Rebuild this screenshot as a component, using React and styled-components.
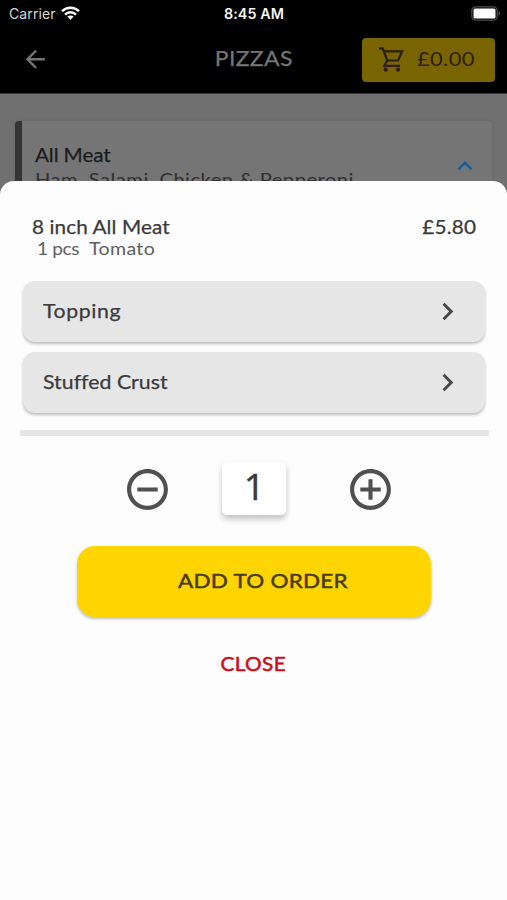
import React from 'react';
import styled, { createGlobalStyle } from 'styled-components';
import {
  MdAddCircleOutline,
  MdArrowBack,
  MdChevronRight,
  MdKeyboardArrowUp,
  MdRemoveCircleOutline,
} from 'react-icons/md';

const GlobalStyle = createGlobalStyle`
  *, *::before, *::after { box-sizing: border-box; }
  body { margin: 0; background: #707070; font-family: Lato, "Open Sans", sans-serif; }
  button { font: inherit; border: 0; padding: 0; background: none; cursor: pointer; }
`;

const Screen = styled.div`
  position: relative;
  width: 100%;
  height: 900px;
  overflow: hidden;
  background: #707070;
`;

/* Lato, widened slightly for a rounder geometric look. */
const Label = styled.span`
  display: block;
  white-space: pre;
  font-size: ${(p) => p.$size}px;
  line-height: 24px;
  letter-spacing: ${(p) => p.$track || 0}px;
  color: ${(p) => p.$color || '#3a3a3a'};
  -webkit-text-stroke: ${(p) => p.$heft || 0}px currentColor;
  transform: scaleX(1.12);
  transform-origin: ${(p) => p.$origin || 'left'} center;
`;

const StatusBar = styled.div`
  display: grid;
  grid-template-columns: 1fr auto 1fr;
  align-items: center;
  height: 27px;
  padding: 0 6px 0 9px;
  background: #000;
  color: #f4f4f4;
  font-family: Inter, sans-serif;
`;

const Carrier = styled.div`
  display: flex;
  align-items: center;
  gap: 5px;
  font-size: 14px;
  letter-spacing: 0.1px;
  color: #d8d8d8;

  svg { margin-bottom: 2px; }
`;

const Clock = styled.div`
  font-size: 14.3px;
  font-weight: 600;
  letter-spacing: 0.1px;
  padding-right: 2px;
`;

const BatterySlot = styled.div`
  display: flex;
  justify-content: flex-end;
  padding-bottom: 1px;
`;

const Header = styled.header`
  display: grid;
  grid-template-columns: 1fr auto 1fr;
  align-items: center;
  height: 67px;
  padding: 0 12px 0 21px;
  border-bottom: 1px solid #393939;
  background: #000;
`;

const BackButton = styled.button`
  display: flex;
  justify-self: start;
  margin-bottom: 1px;
  color: #757575;
  font-size: 28.5px;
`;

const Title = styled.div`
  padding: 0 8px 4px 0;
`;

const CartButton = styled.button`
  display: flex;
  align-items: center;
  justify-self: end;
  gap: 12px;
  width: 133px;
  height: 44px;
  margin-bottom: 1px;
  padding: 0 0 1px 14px;
  border-radius: 4px;
  background: #786400;

  svg { flex: none; }
`;

const MenuCard = styled.section`
  display: flex;
  justify-content: space-between;
  height: 100px;
  margin: 27px 15px 0;
  padding: 22px 12px 0 13px;
  border-left: 7px solid #353535;
  border-radius: 4px;
  background: #757575;
  box-shadow: 0 0 3px rgba(0, 0, 0, 0.1);

  > svg { margin-top: 8px; color: #125f9c; font-size: 30px; }
`;

const Sheet = styled.section`
  position: absolute;
  inset: 181px 0 0;
  padding: 34px 22.5px 0 23px;
  border-radius: 14px 14px 0 0;
  background: #fdfdfd;
`;

const ItemHeading = styled.div`
  display: flex;
  justify-content: space-between;
  padding: 0 8px 0 9px;
`;

const Details = styled.div`
  display: flex;
  gap: 14px;
  height: 41px;
  padding: 0 14px;
  margin-top: -2px;
`;

const OptionRow = styled.button`
  display: flex;
  align-items: center;
  justify-content: space-between;
  width: 100%;
  height: 61px;
  margin-bottom: 10px;
  padding: 0 20px 0 19.5px;
  border-radius: 12px;
  background: #e6e6e6;
  box-shadow: 0 2px 3px rgba(0, 0, 0, 0.25);
  color: #484848;

  span { padding-bottom: 1px; }
  svg { font-size: 35px; }
`;

const Options = styled.div`
  padding-top: 3px;
`;

const Divider = styled.hr`
  height: 6px;
  margin: 17px -4px 0 -3px;
  border: 0;
  background: #e6e6e6;
`;

const Stepper = styled.div`
  display: flex;
  align-items: center;
  justify-content: space-between;
  margin: 25px 90px 0 100px;
  height: 54px;
`;

const StepButton = styled.button`
  display: flex;
  margin-top: 3px;
  color: #505050;
  font-size: 49px;
`;

const Count = styled.output`
  width: 64px;
  height: 53px;
  margin-right: 9px;
  border-radius: 5px;
  background: #fff;
  box-shadow: 0 4px 6px rgba(0, 0, 0, 0.24);
  color: #3c3c3c;
  font: 37px/47px "Open Sans", sans-serif;
  -webkit-text-stroke: 0.5px currentColor;
  text-align: center;
`;

const AddButton = styled.button`
  display: flex;
  align-items: center;
  width: 354px;
  height: 71px;
  margin: 31px 0 0 54px;
  padding: 0 0 3px 100.5px;
  border-radius: 18px;
  background: #fed500;
  box-shadow: 0 2px 3px rgba(0, 0, 0, 0.25);
`;

const CloseButton = styled.button`
  display: block;
  margin: 35px auto 0;
`;

const WifiIcon = () => (
  <svg width="19" height="14" viewBox="0 0 19 14" fill="none" stroke="#fff" strokeWidth="2.5">
    <path d="M1 5.2C5.8.6 13.2.6 18 5.2" />
    <path d="M4 8.6c3.1-3 7.9-3 11 0" />
    <path d="M9.5 13.8 6.3 10.6c1.8-1.5 4.6-1.5 6.4 0Z" fill="#fff" stroke="none" />
  </svg>
);

const BatteryIcon = () => (
  <svg width="30" height="15" viewBox="0 0 30 15">
    <rect x=".8" y=".8" width="25.4" height="13.4" rx="4" fill="none" stroke="#4c4c4c" strokeWidth="1.3" />
    <rect x="2.5" y="2.5" width="22" height="10" rx="1.6" fill="#fff" />
    <path d="M27.6 5v5c1-.4 1.6-1.3 1.6-2.5S28.6 5.4 27.6 5Z" fill="#4c4c4c" />
  </svg>
);

const CartIcon = () => (
  <svg width="29" height="29" viewBox="0 0 29 29" fill="none" stroke="#2b1f16" strokeWidth="2.2">
    <path d="M3 3.3h3.7L11.2 15.5h10.9l4.1-9.2H7.6M11.2 15.5 8.3 20.800H24" />
    <circle cx="9.7" cy="24.6" r="2.1" fill="#2b1f16" stroke="none" />
    <circle cx="22" cy="24.6" r="2.1" fill="#2b1f16" stroke="none" />
  </svg>
);

const options = [
  { name: 'Topping', track: 0.54 },
  { name: 'Stuffed Crust', track: 0.02 },
];

export default function App() {
  return (
    <Screen>
      <GlobalStyle />
      <StatusBar>
        <Carrier>Carrier <WifiIcon /></Carrier>
        <Clock>8:45 AM</Clock>
        <BatterySlot><BatteryIcon /></BatterySlot>
      </StatusBar>
      <Header>
        <BackButton aria-label="Back"><MdArrowBack /></BackButton>
        <Title><Label $size={20.5} $track={0.3} $color="#757575" $origin="center" $heft={0.25}>PIZZAS</Label></Title>
        <CartButton>
          <CartIcon />
          <Label $size={19.5} $track={0.35} $color="#2b1f16">£0.00</Label>
        </CartButton>
      </Header>
      <MenuCard>
        <div>
          <Label $size={18.5} $track={-0.1} $color="#1c1c1c" $heft={0.25}>All Meat</Label>
          <Label $size={18} $track={0.43} $color="#303030">Ham, Salami, Chicken & Pepperoni</Label>
        </div>
        <MdKeyboardArrowUp />
      </MenuCard>
      <Sheet>
        <ItemHeading>
          <Label $size={18.5} $track={0.08} $heft={0.25}>8 inch All Meat</Label>
          <Label $size={18.5} $track={0.2} $origin="right" $heft={0.25}>£5.80</Label>
        </ItemHeading>
        <Details>
          <Label $size={17} $track={-0.3} $color="#606060">1 pcs</Label>
          <Label $size={17.5} $track={0.3} $color="#606060">Tomato</Label>
        </Details>
        <Options>
          {options.map((o) => (
            <OptionRow key={o.name}>
              <Label $size={19} $track={o.track} $heft={0.25}>{o.name}</Label>
              <MdChevronRight />
            </OptionRow>
          ))}
        </Options>
        <Divider />
        <Stepper>
          <StepButton aria-label="Decrease"><MdRemoveCircleOutline /></StepButton>
          <Count>1</Count>
          <StepButton aria-label="Increase"><MdAddCircleOutline /></StepButton>
        </Stepper>
        <AddButton>
          <Label $size={20} $track={0.25} $color="#493b18" $heft={0.5}>ADD TO ORDER</Label>
        </AddButton>
        <CloseButton>
          <Label $size={18.5} $track={0.35} $color="#c90c18" $origin="center" $heft={0.5}>CLOSE</Label>
        </CloseButton>
      </Sheet>
    </Screen>
  );
}
